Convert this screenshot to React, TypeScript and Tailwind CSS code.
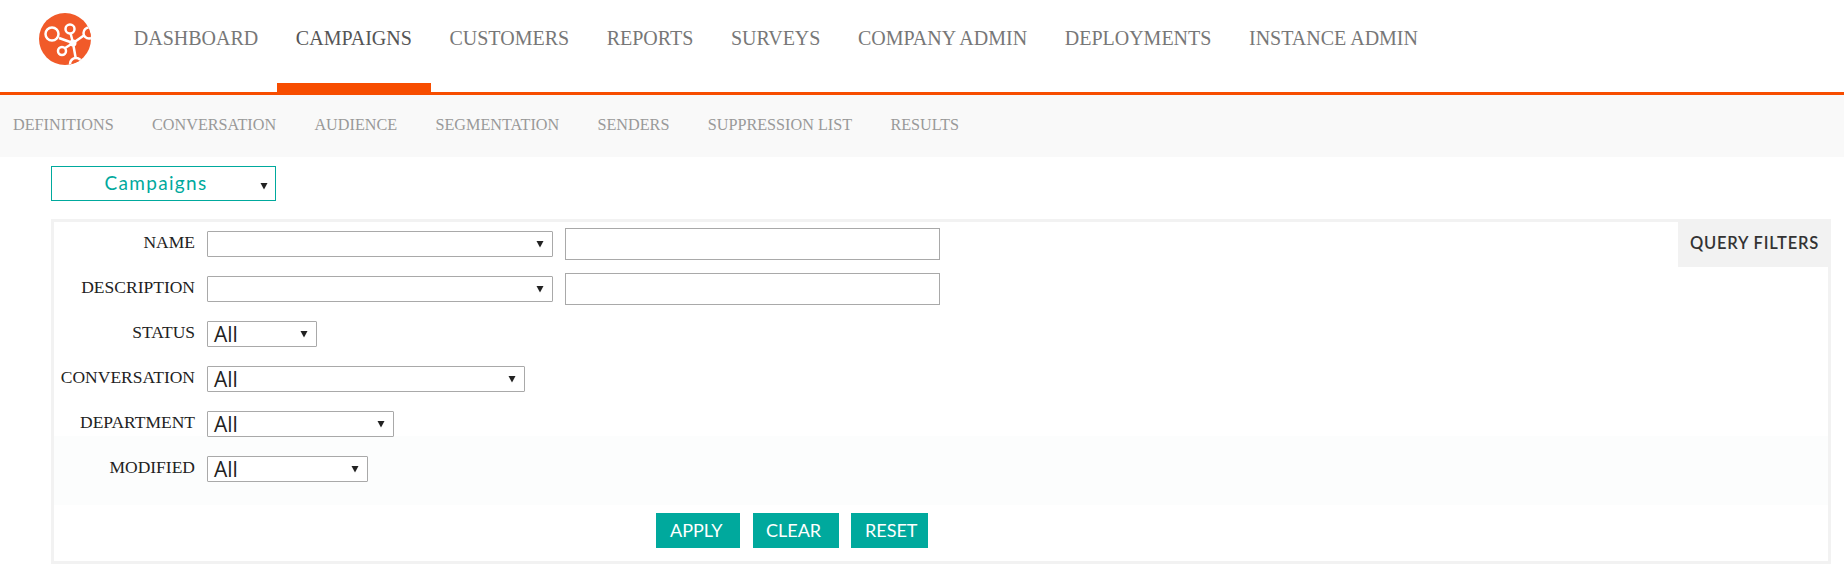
/**
 * Campaign query filters page
 */

import React from 'react';

const mainNav = ['DASHBOARD', 'CAMPAIGNS', 'CUSTOMERS', 'REPORTS', 'SURVEYS', 'COMPANY ADMIN', 'DEPLOYMENTS', 'INSTANCE ADMIN'];
const subNav = ['DEFINITIONS', 'CONVERSATION', 'AUDIENCE', 'SEGMENTATION', 'SENDERS', 'SUPPRESSION LIST', 'RESULTS'];

const Caret = () => (
    <svg width="8" height="8" viewBox="0 0 8 8" className="shrink-0">
        <path d="M0.5 1 H7.5 L4 7.5 Z" fill="#222" />
    </svg>
);

const Logo = () => (
    <svg width="52" height="52" viewBox="0 0 52 52" className="shrink-0">
        <defs>
            <clipPath id="logo-clip">
                <circle cx="26" cy="26" r="26" />
            </clipPath>
        </defs>
        <circle cx="26" cy="26" r="26" fill="#f15a29" />
        <g clipPath="url(#logo-clip)" stroke="#fff" strokeWidth="2.5" fill="none">
            <path d="M20 25 L34 30 M31 18 L34 30 M23 37 L34 30 M34 30 L47 21 M34 30 L37 47" />
            <circle cx="13" cy="21" r="6.5" fill="#f15a29" />
            <circle cx="31" cy="16" r="4.5" fill="#f15a29" />
            <circle cx="23" cy="38" r="4" fill="#f15a29" />
            <circle cx="50" cy="20" r="5.5" fill="#f15a29" />
            <circle cx="37" cy="51" r="6" fill="#f15a29" />
            <circle cx="34" cy="30" r="3.5" fill="#fff" stroke="none" />
        </g>
    </svg>
);

const FakeSelect = ({ width, value }: { width: string; value?: string }) => (
    <div className={`${width} h-[26px] flex items-center justify-between pl-[6px] pr-[8px] bg-white border border-[#a9a9a9] rounded-[1px] text-[21px] text-[#222] font-['Open_Sans',sans-serif]`}>
        <span className="leading-none pt-[1px]">{value}</span>
        <Caret />
    </div>
);

const FilterRow = ({ label, children }: { label: string; children: React.ReactNode }) => (
    <div className="flex items-center h-[45px]">
        <div className="w-[141px] text-right text-[17.5px] text-[#222] font-['Liberation_Serif',serif] -mt-[3px] whitespace-nowrap">{label}</div>
        <div className="flex items-center gap-[12px] ml-[12px]">{children}</div>
    </div>
);

const TextBox = () => <div className="w-[375px] h-[32px] bg-white border border-[#a9a9a9]" />;

export default function App() {
    return (
        <div className="min-h-[579px] bg-white font-['Liberation_Serif',serif]">
            <header className="h-[95px] border-b-[3px] border-[#f74d00] flex">
                <div className="pl-[39px] pt-[13px] w-[115px]">
                    <Logo />
                </div>
                <nav className="flex items-start">
                    {mainNav.map((item) => (
                        <div key={item} className={`relative h-[92px] px-[18.8px] pt-[26px] text-[20px] leading-[24px] whitespace-nowrap ${item === 'CAMPAIGNS' ? 'text-[#555]' : 'text-[#777]'}`}>
                            {item}
                            {item === 'CAMPAIGNS' && <span className="absolute left-0 right-0 bottom-0 h-[9px] bg-[#f74d00]" />}
                        </div>
                    ))}
                </nav>
            </header>

            <div className="h-[62px] bg-[#f9f9f9] flex items-center pl-[13px] gap-[38.3px] pb-[2px]">
                {subNav.map((item) => (
                    <span key={item} className="text-[16.2px] text-[#999] whitespace-nowrap">{item}</span>
                ))}
            </div>

            <div className="pl-[51px] pr-[13px] pt-[9px]">
                <div className="w-[225px] h-[35px] border border-[#00a99d] flex items-center pr-[7px]">
                    <span className="flex-1 text-center text-[19px] tracking-[1.3px] text-[#00a99d] font-['Lato',sans-serif]">Campaigns</span>
                    <span className="mt-[4px]"><Caret /></span>
                </div>

                <section className="relative mt-[18px] h-[345px] border-[3px] border-[#f2f2f2]">
                    <div className="absolute right-[-3px] top-[-3px] w-[153px] h-[48px] pt-[1px] bg-[#f2f2f2] flex items-center justify-center text-[16.5px] font-semibold tracking-[0.8px] text-[#333] font-['Lato',sans-serif]">
                        QUERY FILTERS
                    </div>

                    <div className="-mt-[1px]">
                        <FilterRow label="NAME">
                            <FakeSelect width="w-[346px]" />
                            <TextBox />
                        </FilterRow>
                        <FilterRow label="DESCRIPTION">
                            <FakeSelect width="w-[346px]" />
                            <TextBox />
                        </FilterRow>
                        <FilterRow label="STATUS">
                            <FakeSelect width="w-[110px]" value="All" />
                        </FilterRow>
                        <FilterRow label="CONVERSATION">
                            <FakeSelect width="w-[318px]" value="All" />
                        </FilterRow>
                        <FilterRow label="DEPARTMENT">
                            <FakeSelect width="w-[187px]" value="All" />
                        </FilterRow>
                    </div>
                    <div className="bg-[#fcfdfd] -mt-[10px] pt-[10px] pb-[14px]">
                        <FilterRow label="MODIFIED">
                            <FakeSelect width="w-[161px]" value="All" />
                        </FilterRow>
                    </div>
                    <div className="flex pl-[602px] pt-[8px] font-['Lato',sans-serif] text-[18px] text-white">
                        <button className="w-[84px] h-[35px] bg-[#00a99d] text-left pl-[14px]">APPLY</button>
                        <button className="w-[86px] h-[35px] bg-[#00a99d] text-left pl-[13px] ml-[13px]">CLEAR</button>
                        <button className="w-[77px] h-[35px] bg-[#00a99d] text-left pl-[14px] ml-[12px]">RESET</button>
                    </div>
                </section>
            </div>
        </div>
    );
}
